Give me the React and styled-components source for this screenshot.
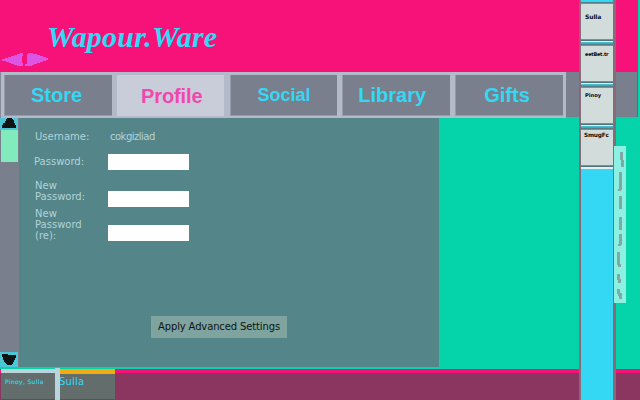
import React from "react";
import styled, { createGlobalStyle } from "styled-components";

const GlobalStyle = createGlobalStyle`
  * { box-sizing: border-box; }
  body { margin: 0; overflow: hidden; background: #05d4ab; }
`;

const Desktop = styled.div`
  position: relative;
  width: 640px;
  height: 400px;
  overflow: hidden;
  display: flex;
  flex-direction: column;
  background: #05d4ab;
  font-family: "DejaVu Sans", Verdana, sans-serif;
`;

const Header = styled.header`
  width: 638px;
  height: 72px;
  flex: none;
  display: flex;
  align-items: flex-start;
  background: #f71279;
`;

const HistoryArrows = styled.svg`
  width: 48px;
  height: 14px;
  margin-top: 53px;
  flex: none;
`;

const Brand = styled.h1`
  margin: 20px 0 0 -1px;
  font: italic bold 30px/34px "Liberation Serif", "Times New Roman", serif;
  letter-spacing: 0.2px;
  color: #34d8f4;
`;

const NavRow = styled.div`
  display: flex;
  width: 638px;
  height: 46px;
  flex: none;
`;

const Tabs = styled.nav`
  display: grid;
  grid-template-columns: 108px 107px 107px 108px 108px;
  justify-content: space-between;
  width: 566px;
  height: 46px;
  padding: 3px 3px 3px 3px;
  border-left: 1px solid #858a98;
  background: #b3bbca;
`;

const Tab = styled.a`
  display: flex;
  justify-content: center;
  height: 41px;
  padding-top: ${(p) => p.$top}px;
  padding-right: ${(p) => p.$right || 0}px;
  padding-left: ${(p) => p.$left || 0}px;
  background: ${(p) => (p.$active ? "#c9cdd9" : "#7a7f8d")};
  box-shadow: ${(p) => (p.$active ? "none" : "inset 1px -1px #969bab")};
  color: ${(p) => (p.$active ? "#f246b0" : "#34d8f4")};
  font: bold ${(p) => p.$size}px/24px "Liberation Sans", Arial, sans-serif;
  letter-spacing: ${(p) => p.$spacing || 0}px;
`;

const NavFiller = styled.div`
  width: 72px;
  height: 45px;
  background: #7a7f8d;
  border-right: 1px solid #b83a72;
`;

const Workspace = styled.main`
  display: flex;
  width: 439px;
  height: 249px;
  flex: none;
`;

const ScrollBar = styled.div`
  display: flex;
  flex-direction: column;
  width: 19px;
  background: #7a7f8d;
`;

const ScrollButton = styled.svg`
  width: 18px;
  height: ${(p) => p.$height}px;
  flex: none;
  background: #4cc6d4;
  margin-top: ${(p) => (p.$end ? "auto" : 0)};
`;

const ScrollThumb = styled.div`
  width: 17px;
  height: 32px;
  margin-left: 1px;
  background: #82ebbc;
`;

const Panel = styled.form`
  display: flex;
  flex-direction: column;
  width: 420px;
  background: #548588;
  color: #b3d3da;
  font-size: 10px;
  line-height: 11px;
`;

const Field = styled.div`
  display: grid;
  grid-template-columns: 73px 81px;
  align-items: start;
  height: ${(p) => p.$height}px;
  padding-left: 16px;
  flex: none;
`;

const Label = styled.label`
  padding-top: ${(p) => p.$top}px;
  margin-left: ${(p) => p.$shift || 0}px;
  white-space: pre-line;
`;

const Value = styled.span`
  padding: 13px 0 0 2px;
  letter-spacing: -0.5px;
`;

const Input = styled.input`
  width: 81px;
  height: 16px;
  margin: ${(p) => p.$top || 0}px 0 0;
  padding: 0;
  border: 0;
  border-radius: 0;
  background: #fff;
`;

const ApplyButton = styled.button`
  width: 136px;
  height: 22px;
  margin: auto 0 29px 132px;
  padding: 0 0 1px;
  border: 0;
  background: #7fa39e;
  color: #0b1515;
  font: 10px/20px "DejaVu Sans", sans-serif;
  letter-spacing: -0.13px;
  white-space: nowrap;
`;

const TaskBar = styled.footer`
  display: flex;
  height: 31px;
  margin-top: 2px;
  border-top: 4px solid #f71279;
  background: #8a3661;
`;

const Task = styled.div`
  width: ${(p) => p.$width}px;
  height: ${(p) => p.$height}px;
  margin: -4px 0 0 ${(p) => p.$left || 0}px;
  border-top: ${(p) => p.$bar}px solid ${(p) => p.$accent};
  padding: ${(p) => p.$pad};
  background: #626d6c;
  color: #34d8f4;
  font-size: ${(p) => p.$size}px;
  line-height: 12px;
  letter-spacing: ${(p) => p.$spacing}px;
  white-space: nowrap;
  -webkit-text-stroke: ${(p) => p.$stroke || 0}px #34d8f4;
  text-indent: ${(p) => p.$indent || 0}px;
`;

const TaskDivider = styled.div`
  width: 5px;
  height: 32px;
  margin-top: -5px;
  background: #b9d4dc;
`;

const Dock = styled.aside`
  position: absolute;
  top: 0;
  left: 579px;
  width: 37px;
  height: 400px;
  padding-top: 2px;
  border: solid #886b79;
  border-width: 0 3px 0 2px;
  background: #34d8f4;
`;

const Contact = styled.div`
  height: 39px;
  border-top: 1px solid #587d89;
  border-bottom: 1px solid #50747c;
  box-shadow: inset 0 1px #4aa3b6, inset 0 -1px #4aa3b6;
  background: #d2dcda;
  padding: ${(p) => p.$top}px 0 0 ${(p) => p.$left}px;
  color: #080c0c;
  font: bold ${(p) => p.$size}px/8px "DejaVu Sans", sans-serif;
  letter-spacing: ${(p) => p.$spacing}px;
  white-space: nowrap;
`;

const ContactGap = styled.div`
  height: 3px;
  border-top: 1px solid #e3eeee;
  border-bottom: 1px solid ${(p) => (p.$last ? "#34d8f4" : "#4aa3b6")};
  background: ${(p) => (p.$last ? "#e3eeee" : "#49bdd0")};
`;

const SideLabel = styled.svg`
  position: absolute;
  top: 146px;
  left: 614px;
  width: 12px;
  height: 157px;
  background: #8cf0e3;
`;

const tabs = [
  { name: "Store", size: 20, top: 8, right: 3 },
  { name: "Profile", size: 20, top: 9, left: 2, active: true, spacing: -0.1 },
  { name: "Social", size: 18, top: 8, left: 2 },
  { name: "Library", size: 20, top: 8, right: 7 },
  { name: "Gifts", size: 20, top: 8, right: 4 },
];

const contacts = [
  { name: "Sulla", top: 10, left: 4, size: 6, spacing: -0.1 },
  { name: "eetBet.tr", top: 5, left: 4, size: 5, spacing: -0.25 },
  { name: "Pinoy", top: 4, left: 4, size: 5.2, spacing: 0 },
  { name: "SmugFc", top: 2, left: 3, size: 5.8, spacing: -0.2 },
];

export default function App() {
  return (
    <>
      <GlobalStyle />
      <Desktop>
        <Header>
          <HistoryArrows viewBox="0 0 48 14" fill="#dc55e5" shapeRendering="crispEdges">
            <path d="M2 6h3V5h3V4h3V3h3V2h3V1h3V0h3v3h-1v7h1v3h-6v-1h-3v-1h-3v-1H9V9H6V8H2z" />
            <path d="M28 0h5v1h4v1h3v1h3v1h3v1h2v2h-2v1h-3v1h-3v1h-3v1h-3v1h-2v1h-7v-2h2V2h-1z" />
          </HistoryArrows>
          <Brand>Wapour.Ware</Brand>
        </Header>
        <NavRow>
          <Tabs>
            {tabs.map((t) => (
              <Tab
                key={t.name}
                $size={t.size}
                $top={t.top}
                $left={t.left}
                $right={t.right}
                $active={t.active}
                $spacing={t.spacing}
              >
                {t.name}
              </Tab>
            ))}
          </Tabs>
          <NavFiller />
        </NavRow>
        <Workspace>
          <ScrollBar>
            <ScrollButton $height={12} viewBox="0 0 18 12" shapeRendering="crispEdges">
              <path fill="#101414" d="M7 0h5v1h1v1h1v3h1v2h1v3H2V7h1V5h2V3h1V1h1z" />
            </ScrollButton>
            <ScrollThumb />
            <ScrollButton $height={15} $end viewBox="0 0 18 15" shapeRendering="crispEdges">
              <path fill="#101414" d="M2 2h6v1h8v3h-1v2h-1v2h-1v2h-1v1H7v-1H6v-1H5v-1H4V8H3V5H2z" />
            </ScrollButton>
          </ScrollBar>
          <Panel onSubmit={(e) => e.preventDefault()}>
            <Field $height={36}>
              <Label $top={13}>Username:</Label>
              <Value>cokgizliad</Value>
            </Field>
            <Field $height={26}>
              <Label $top={2} $shift={-1}>Password:</Label>
              <Input />
            </Field>
            <Field $height={28}>
              <Label $top={0}>{"New\nPassword:"}</Label>
              <Input $top={11} />
            </Field>
            <Field $height={40}>
              <Label $top={0}>{"New\nPassword\n(re):"}</Label>
              <Input $top={17} />
            </Field>
            <ApplyButton>Apply Advanced Settings</ApplyButton>
          </Panel>
        </Workspace>
        <TaskBar>
          <Task
            $left={1}
            $width={54}
            $height={30}
            $bar={4}
            $accent="#b9d4dc"
            $size={6}
            $spacing={0.35}
            $stroke={0.15}
            $pad="3px 0 0 4px"
          >
            Pinoy, Sulla
          </Task>
          <TaskDivider />
          <Task
            $width={55}
            $height={30}
            $bar={5}
            $accent="#efad13"
            $size={10}
            $spacing={0.2}
            $indent={-1}
            $pad="2px 0 0 0"
          >
            Sulla
          </Task>
        </TaskBar>
        <Dock>
          {contacts.map((c, i) => (
            <React.Fragment key={c.name}>
              <Contact $top={c.top} $left={c.left} $size={c.size} $spacing={c.spacing}>
                {c.name}
              </Contact>
              <ContactGap $last={i === contacts.length - 1} />
            </React.Fragment>
          ))}
        </Dock>
        <SideLabel viewBox="0 0 12 157" fill="#7fa9a3" shapeRendering="crispEdges">
          <path d="M6 6h3v8h1v7H7v-7H6zM5 26h3v18H7v1H4v-2h1zM5 50h3v13H5zM5 71h3v13H5zM5 88h3v11H7v1H4v-2h1zM3 106h3v12h1v3H4v-2H3zM3 128h3v5h1v4H4v-3H3zM3 143h3v4h2v6H5v-3H4v-2H3z" />
        </SideLabel>
      </Desktop>
    </>
  );
}
